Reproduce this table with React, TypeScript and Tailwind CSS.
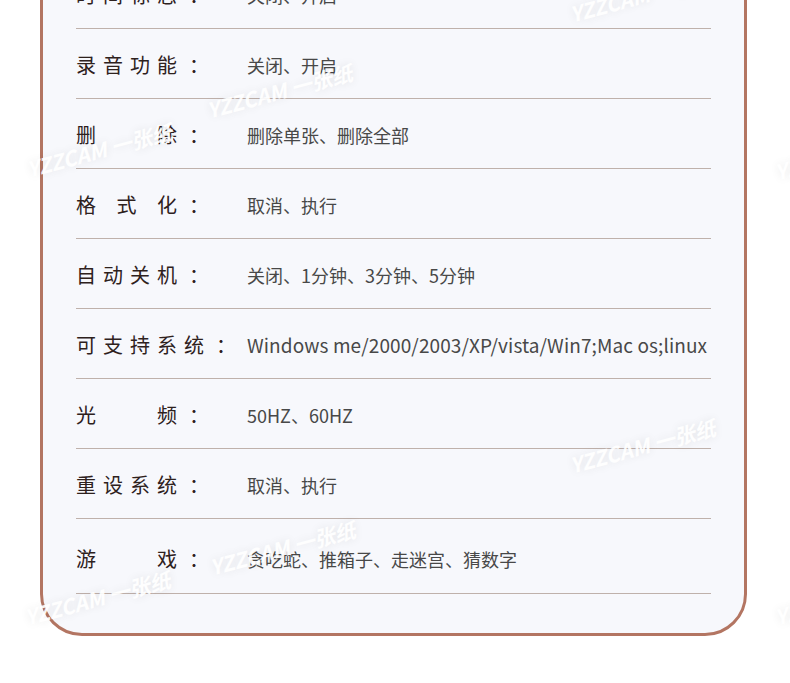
import React from "react";

const rows: { label: string[]; value: string; last?: boolean; wide?: boolean }[] = [
  { label: ["时", "间", "标", "志"], value: "关闭、开启" },
  { label: ["录", "音", "功", "能"], value: "关闭、开启" },
  { label: ["删", "除"], value: "删除单张、删除全部" },
  { label: ["格", "式", "化"], value: "取消、执行" },
  { label: ["自", "动", "关", "机"], value: "关闭、1分钟、3分钟、5分钟" },
  { label: ["可", "支", "持", "系", "统"], value: "Windows me/2000/2003/XP/vista/Win7;Mac os;linux", wide: true },
  { label: ["光", "频"], value: "50HZ、60HZ" },
  { label: ["重", "设", "系", "统"], value: "取消、执行" },
  { label: ["游", "戏"], value: "贪吃蛇、推箱子、走迷宫、猜数字", last: true },
];

const marks = [
  { x: 570, y: -1 },
  { x: 207, y: 95 },
  { x: 27, y: 154 },
  { x: 570, y: 450 },
  { x: 210, y: 552 },
  { x: 25, y: 602 },
  { x: 775, y: 157 },
  { x: 775, y: 602 },
];

export default function App() {
  return (
    <div
      className="relative w-[790px] h-[683px] overflow-hidden bg-white"
      style={{ fontFamily: '"Noto Sans CJK SC", "Noto Sans", sans-serif' }}
    >
      <div className="ml-[40px] mt-[-120px] w-[707px] rounded-[42px] border-[3px] border-[#b37562] bg-[#f7f8fc] px-[33px] pt-[76px] pb-[39px]">
        {rows.map((r, i) => (
          <div
            key={i}
            className={
              r.last
                ? "flex h-[75px] items-center border-b border-[#bfb1ab] pt-[6px]"
                : "flex h-[70px] items-center border-b border-[#bfb1ab] pt-[2px]"
            }
          >
            <div className="flex w-[171px] items-center text-[20px] font-normal leading-[24px] text-[#2e211d]">
              <div className="flex min-w-[101px] justify-between gap-[7px]">
                {r.label.map((c, j) => (
                  <span key={j}>{c}</span>
                ))}
              </div>
              <span className="ml-[12px]">：</span>
            </div>
            <div
              className={
                r.wide
                  ? "whitespace-nowrap text-[19px] tracking-[0.1px] leading-[24px] text-[#484848]"
                  : "whitespace-nowrap text-[18px] leading-[24px] text-[#484848]"
              }
            >
              {r.value}
            </div>
          </div>
        ))}
      </div>
      {marks.map((m, i) => (
        <div
          key={i}
          className="pointer-events-none absolute whitespace-nowrap text-[21px] leading-[30px] font-bold italic text-white opacity-90 [text-shadow:0_0_10px_rgba(0,0,0,0.09)]"
          style={{ left: m.x, top: m.y, transform: "rotate(-15deg)", transformOrigin: "left center" }}
        >
          YZZCAM 一张纸
        </div>
      ))}
    </div>
  );
}
